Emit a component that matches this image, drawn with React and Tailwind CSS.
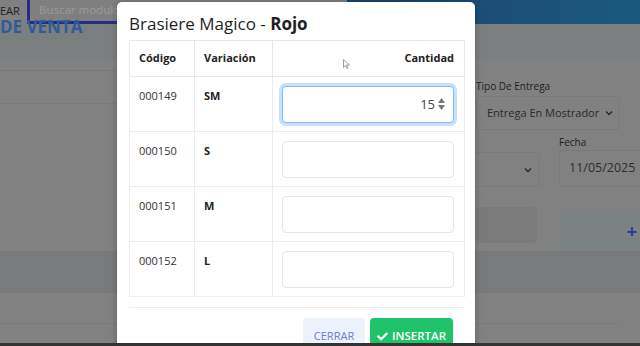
import { FaCheck } from "react-icons/fa";

const rows = [
  { code: "000149", size: "SM", qty: "15", active: true },
  { code: "000150", size: "S" },
  { code: "000151", size: "M" },
  { code: "000152", size: "L" },
];

const QtyInput = ({ qty, active }) => {
  if (!active) {
    return <div className="h-[37px] w-full rounded-[4px] border border-[#e3e6ea] bg-white" />;
  }

  return (
    <div className="flex h-[37px] w-full items-center justify-end rounded-[4px] border border-[#86b7fe] bg-white pr-[8px] shadow-[0_0_0_3px_rgba(13,110,253,0.22)]">
      <span className="text-[13px] leading-none text-[#444]">{qty}</span>
      <span className="ml-[3px] flex flex-col gap-[2px]">
        <svg width="7" height="5" viewBox="0 0 7 5">
          <path d="M3.5 0L7 5H0z" fill="#777" />
        </svg>
        <svg width="7" height="5" viewBox="0 0 7 5">
          <path d="M0 0h7L3.5 5z" fill="#777" />
        </svg>
      </span>
    </div>
  );
};

const Chevron = () => (
  <svg width="8" height="6" viewBox="0 0 8 6" className="text-[#2a2a2a]">
    <path d="M1 1.5l3 3 3-3" fill="none" stroke="currentColor" strokeWidth="1.4" />
  </svg>
);

const App = () => {
  return (
    <div className="relative h-[346px] w-[640px] overflow-hidden bg-[#818181] font-['Open_Sans',sans-serif]">
      {/* page behind the dialog (already dimmed) */}
      <header className="flex h-[24px]">
        <div className="w-[27px] pt-[5px] text-[11px] leading-[12px] text-[#1c1c1c]">EAR</div>
        <div className="w-[320px] border-b-[3px] border-l-[3px] border-[#262c86] bg-[#7f7f7f] pl-[9px] pt-[2px] text-[11.5px] leading-[16px] text-[#9a9a9a]">
          Buscar modulos
        </div>
        <div className="flex-1 bg-gradient-to-r from-[#1b426e] to-[#1a5a80]" />
      </header>

      <div className="h-[40px] bg-[#7b7f80]">
        <div className="-mt-[4px] whitespace-nowrap text-[17px] font-bold leading-[13px] text-[#2f5c98]">
          DE VENTA
        </div>
      </div>

      <div className="flex h-[191px]">
        <div className="w-[420px]">
          <div className="h-[11px] border-b border-[#777]" />
          <div className="h-[33px] border-b border-[#7a7a7a]" />
        </div>
        <div className="w-[220px] pt-[20px]">
          <div className="pl-[56px] text-[10px] leading-[12px] text-[#1e1e1e]">Tipo De Entrega</div>
          <div className="ml-[56px] mt-[4px] flex h-[34px] w-[144px] items-center justify-between whitespace-nowrap rounded-[4px] border border-[#7a7a7a] pl-[10px] pr-[6px] text-[11px] text-[#2a2a2a]">
            Entrega En Mostrador
            <Chevron />
          </div>
          <div className="mt-[6px] flex items-end">
            <div className="flex h-[35px] w-[120px] items-center justify-end rounded-[4px] border border-[#7a7a7a] pr-[7px]">
              <Chevron />
            </div>
            <div className="ml-[19px] flex-1">
              <div className="text-[10px] leading-[12px] text-[#1e1e1e]">Fecha</div>
              <div className="mt-[2px] flex h-[37px] items-center whitespace-nowrap rounded-l-[4px] border border-r-0 border-[#7a7a7a] pl-[9px] text-[12.5px] text-[#2e2e2e]">
                11/05/2025
              </div>
            </div>
          </div>
          <div className="mt-[20px] flex items-start">
            <div className="ml-[56px] h-[36px] w-[61px] rounded-[4px] bg-[#7a7a7a]" />
            <div className="ml-[22px] mt-[5px] flex h-[38px] flex-1 items-center justify-end rounded-l-[4px] bg-[#7b8284] pr-[3px] text-[18px] font-bold leading-none text-[#2a3a9a]">
              +
            </div>
          </div>
        </div>
      </div>

      <div className="h-[42px] bg-[#777b7d]" />

      <div className="flex">
        <div className="h-[31px] w-[478px] border-b border-[#7a7a7a]" />
        <div className="mt-[30px] h-[16px] w-[142px] border-l border-t border-[#7a7a7a]" />
      </div>

      {/* dialog */}
      <div className="absolute left-[117px] top-[2px] h-[380px] w-[358px] rounded-t-[5px] bg-white pl-[12px] pr-[10px] pt-[10px] shadow-[0_0_6px_rgba(0,0,0,0.25)]">
        <h2 className="text-[17px] leading-[24px] text-[#1f1f1f]">
          Brasiere Magico - <span className="font-bold">Rojo</span>
        </h2>

        <table className="mt-[4px] w-[336px] table-fixed border-collapse text-[11px] text-[#333]">
          <thead>
            <tr className="h-[36px]">
              <th className="w-[65px] border border-[#e8e8e8] pl-[9px] text-left font-bold text-[#222]">Código</th>
              <th className="w-[78px] border border-[#e8e8e8] pl-[9px] text-left font-bold text-[#222]">Variación</th>
              <th className="border border-[#e8e8e8] pr-[10px] text-right font-bold text-[#222]">Cantidad</th>
            </tr>
          </thead>
          <tbody>
            {rows.map((row) => (
              <tr key={row.code} className="h-[55px]">
                <td className="border border-[#ececec] pl-[9px] pt-[9px] align-top leading-[20px]">{row.code}</td>
                <td className="border border-[#ececec] pl-[9px] pt-[9px] align-top font-bold leading-[20px] text-[#222]">
                  {row.size}
                </td>
                <td className="border border-[#ececec] pl-[9px] pr-[10px] align-middle">
                  <QtyInput qty={row.qty} active={row.active} />
                </td>
              </tr>
            ))}
          </tbody>
        </table>

        <div className="mt-[10px] border-t border-[#f2eaea]" />

        <div className="mt-[10px] flex justify-end gap-[5px] pr-[12px]">
          <button className="h-[36px] w-[62px] rounded-[4px] bg-[#edf3fc] text-[11px] text-[#6b79d9]">CERRAR</button>
          <button className="flex h-[36px] w-[83px] items-center justify-center gap-[4px] rounded-[4px] bg-[#1fc46a] text-[11.5px] font-semibold text-white">
            <FaCheck className="h-[11px] w-[11px]" />
            INSERTAR
          </button>
        </div>
      </div>

      {/* mouse pointer */}
      <svg className="absolute left-[343px] top-[59px]" width="7" height="10" viewBox="0 0 7 10">
        <path d="M0.5 0.5v8l2-2 1.5 3 1-0.5-1.5-3h3z" fill="#fff" stroke="#888" strokeWidth="0.8" />
      </svg>

      <div className="absolute bottom-0 left-0 h-[3px] w-full bg-[#333]" />
    </div>
  );
};

export default App;
